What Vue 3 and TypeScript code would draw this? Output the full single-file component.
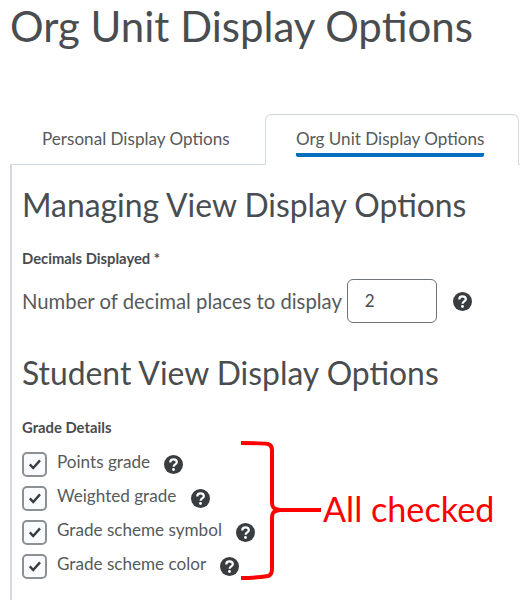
<template>
  <div class="page">
    <h1 class="page-title">Org Unit Display Options</h1>

    <div class="tabs">
      <div class="tab">Personal Display Options</div>
      <div class="tab tab-active">
        <span class="tab-label">Org Unit Display Options</span>
      </div>
    </div>

    <div class="panel">
      <h2 class="section-title">Managing View Display Options</h2>
      <div class="field-label">Decimals Displayed *</div>
      <div class="decimals-row">
        <span class="decimals-text">Number of decimal places to display</span>
        <div class="decimals-input">2</div>
        <svg class="help help-large" viewBox="0 0 20 20"><use href="#help-icon" /></svg>
      </div>

      <h2 class="section-title student-title">Student View Display Options</h2>
      <div class="field-label grade-label">Grade Details</div>
      <ul class="options">
        <li v-for="item in options" :key="item.label" class="option">
          <span class="checkbox">
            <svg viewBox="0 0 16 16" width="16" height="16">
              <path d="M2.8 8.4 L6.2 12 L13 4.4" fill="none" stroke="#3a3d40" stroke-width="2.4" />
            </svg>
          </span>
          <span class="option-label">{{ item.label }}</span>
          <svg class="help" :style="{ marginLeft: item.gap + 'px' }" viewBox="0 0 20 20"><use href="#help-icon" /></svg>
        </li>
      </ul>
    </div>

    <svg class="bracket" viewBox="0 0 90 145" width="90" height="145">
      <path
        d="M3 3 C14 3 24 3 30 4 C33 5 34 7 34 10 L34 62 C34 67 35 69 42 70 L83 70 M42 70 C35 71 34 73 34 78 L34 129 C34 133 33 135 30 136 C24 137 14 138 3 138"
        fill="none"
        stroke="#ff0000"
        stroke-width="4"
      />
    </svg>
    <div class="callout">All checked</div>

    <svg width="0" height="0" class="defs">
      <defs>
        <g id="help-icon">
          <circle cx="10" cy="10" r="10" fill="#3a3d40" />
          <path d="M6.6 7.8 C6.6 5.8 8.1 4.6 10 4.6 C12 4.6 13.5 5.8 13.5 7.6 C13.5 9.8 10.1 10 10.1 12.4" fill="none" stroke="#fff" stroke-width="2.3" />
          <circle cx="10" cy="15.3" r="1.5" fill="#fff" />
        </g>
      </defs>
    </svg>
  </div>
</template>

<script setup lang="ts">
const options = [
  { label: 'Points grade', gap: 14 },
  { label: 'Weighted grade', gap: 15 },
  { label: 'Grade scheme symbol', gap: 14 },
  { label: 'Grade scheme color', gap: 14 },
]
</script>

<style>
html,
body {
  margin: 0;
  background: #fff;
}
</style>

<style scoped>
.page {
  position: relative;
  width: 520px;
  height: 600px;
  overflow: hidden;
  font-family: Lato, "Liberation Sans", sans-serif;
  color: #494c4e;
  background: #fff;
}

.page-title {
  margin: 0;
  padding: 3px 0 0 10px;
  height: 109px;
  box-sizing: border-box;
  font-size: 42px;
  line-height: 46px;
  font-weight: 400;
  color: #4a4d50;
}

.tabs {
  display: grid;
  grid-template-columns: 265px 254px;
  height: 50px;
  margin-top: 5px;
}

.tab {
  padding-top: 15px;
  padding-left: 42px;
  font-size: 17.1px;
  line-height: 20px;
  color: #565a5c;
}

.tab-active {
  position: relative;
  z-index: 1;
  padding-top: 14px;
  padding-left: 30px;
  border: 1px solid #d3d9e3;
  border-bottom: none;
  border-radius: 6px 6px 0 0;
  background: #fff;
  height: 51px;
  box-sizing: border-box;
}

.tab-label {
  display: inline-block;
  padding-bottom: 4px;
  border-bottom: 4px solid #006fbf;
  border-radius: 2px;
}

.panel {
  margin-left: 10px;
  height: 440px;
  padding: 20px 0 0 10px;
  border-left: 2px solid #d3d9e3;
  border-top: 1px solid #d3d9e3;
  box-sizing: border-box;
}

.section-title {
  margin: 0;
  font-size: 31.85px;
  line-height: 40px;
  font-weight: 400;
  color: #4a4d50;
}

.student-title {
  margin-top: 30px;
}

.field-label {
  margin-top: 24px;
  font-size: 14.8px;
  line-height: 18px;
  font-weight: 700;
  color: #494c4e;
}

.grade-label {
  margin-top: 25px;
}

.decimals-row {
  display: flex;
  align-items: center;
  margin-top: 12px;
}

.decimals-text {
  font-size: 20.3px;
  line-height: 24px;
  color: #565a5c;
}

.decimals-input {
  width: 90px;
  height: 44px;
  margin-left: 5px;
  padding-left: 17px;
  box-sizing: border-box;
  border: 1px solid #6e7477;
  border-radius: 6px;
  font-size: 17px;
  line-height: 42px;
  color: #494c4e;
}

.help {
  width: 19px;
  height: 19px;
  flex: none;
}

.help-large {
  margin-left: 16px;
}

.options {
  list-style: none;
  margin: 11px 0 0;
  padding: 0;
}

.option {
  display: flex;
  align-items: center;
  height: 34px;
}

.checkbox {
  display: flex;
  align-items: center;
  justify-content: center;
  width: 25px;
  height: 25px;
  box-sizing: border-box;
  border: 2px solid #8a9094;
  border-radius: 5px;
  background: #f9fbff;
  flex: none;
}

.option-label {
  margin-left: 10px;
  margin-top: -4px;
  font-size: 17.1px;
  line-height: 22px;
  color: #565a5c;
}

.bracket {
  position: absolute;
  left: 238px;
  top: 440px;
}

.callout {
  position: absolute;
  left: 323px;
  top: 489px;
  font-family: Lato, sans-serif;
  font-size: 34.2px;
  line-height: 40px;
  color: #ff0000;
}

.defs {
  position: absolute;
}
</style>
